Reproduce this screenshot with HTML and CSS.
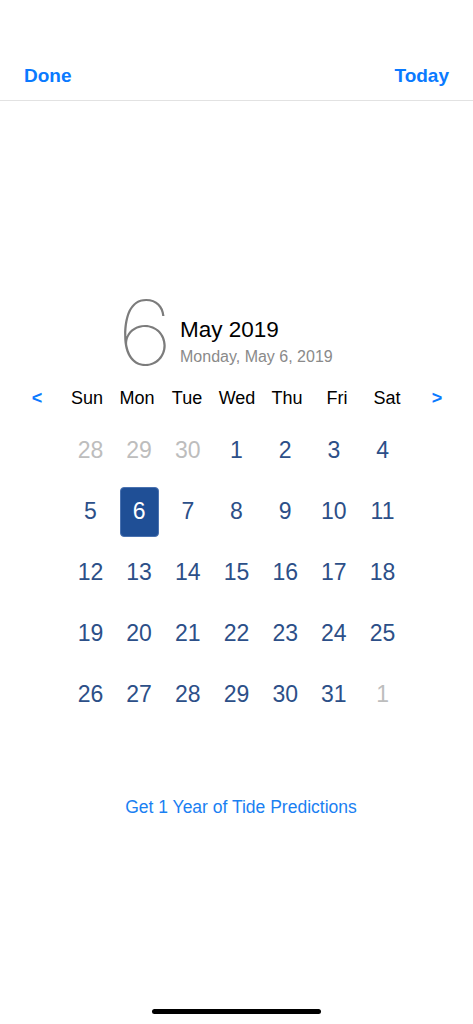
FILE: index.html
```html
<!DOCTYPE html>
<html>
<head>
<meta charset="utf-8">
<link rel="stylesheet" href="styles.css">
</head>
<body>
<div class="screen">
  <header class="nav">
    <span class="nav-btn">Done</span>
    <span class="nav-btn">Today</span>
  </header>

  <section class="title">
    <div class="big-day">6</div>
    <div class="title-text">
      <div class="month">May 2019</div>
      <div class="full-date">Monday, May 6, 2019</div>
    </div>
  </section>

  <div class="weekdays">
    <span class="arrow">&lt;</span>
    <span>Sun</span><span>Mon</span><span>Tue</span><span>Wed</span><span>Thu</span><span>Fri</span><span>Sat</span>
    <span class="arrow">&gt;</span>
  </div>

  <div class="dates">
    <span class="other">28</span><span class="other">29</span><span class="other">30</span><span>1</span><span>2</span><span>3</span><span>4</span>
    <span>5</span><span class="selected">6</span><span>7</span><span>8</span><span>9</span><span>10</span><span>11</span>
    <span>12</span><span>13</span><span>14</span><span>15</span><span>16</span><span>17</span><span>18</span>
    <span>19</span><span>20</span><span>21</span><span>22</span><span>23</span><span>24</span><span>25</span>
    <span>26</span><span>27</span><span>28</span><span>29</span><span>30</span><span>31</span><span class="other">1</span>
  </div>

  <div class="promo">Get 1 Year of Tide Predictions</div>

  <div class="home-bar"></div>
</div>
</body>
</html>
```

FILE: styles.css
```css
* { box-sizing: border-box; }
html, body { margin: 0; padding: 0; background: #fff; }
body { font-family: "Liberation Sans", Arial, sans-serif; }

.screen {
  width: 473px;
  height: 1024px;
  display: flex;
  flex-direction: column;
}

.nav {
  display: flex;
  justify-content: space-between;
  align-items: center;
  padding: 60px 24px 9px 24px;
  height: 101px;
  border-bottom: 1px solid #e2e2e2;
}
.nav-btn {
  color: #0a7aff;
  font-weight: bold;
  font-size: 19px;
  line-height: 32px;
}

.title {
  display: flex;
  align-items: flex-start;
  padding-left: 117px;
  margin-top: 196px;
  height: 72px;
}
.big-day {
  font-family: Inter, "Roboto", sans-serif;
  font-weight: 100;
  font-size: 90px;
  line-height: 72px;
  color: #7c7c7c;
  width: 63px;
  transform: scaleX(1.1);
  transform-origin: left center;
}
.title-text {
  display: flex;
  flex-direction: column;
  padding-top: 20px;
}
.month {
  font-size: 22.5px;
  line-height: 26px;
  color: #000;
}
.full-date {
  font-size: 16px;
  line-height: 22px;
  color: #8a8a8a;
  margin-top: 3px;
}

.weekdays {
  display: grid;
  grid-template-columns: repeat(9, 50px);
  margin: 14px 0 0 12px;
  height: 30px;
  align-items: center;
  justify-items: center;
  font-size: 18px;
  color: #000;
}
.weekdays .arrow {
  color: #0a7aff;
  font-weight: bold;
  font-size: 18px;
}

.dates {
  display: grid;
  grid-template-columns: repeat(7, 48.7px);
  grid-auto-rows: 61px;
  justify-content: center;
  justify-items: center;
  align-items: center;
  margin-top: 7px;
  font-size: 23px;
  color: #2c4f88;
}
.dates span {
  width: 39px;
  height: 50px;
  display: flex;
  align-items: center;
  justify-content: center;
}
.dates .other { color: #bdbdbd; }
.dates .selected {
  background: #1f4f96;
  color: #fff;
  border-radius: 4px;
  border: 1px solid #4a72b0;
}

.promo {
  margin-top: 71px;
  text-align: center;
  padding-left: 9px;
  font-size: 17.5px;
  line-height: 22px;
  color: #1a80f2;
}

.home-bar {
  margin: auto auto 10px auto;
  width: 169px;
  height: 5px;
  border-radius: 3px;
  background: #000;
}
```
